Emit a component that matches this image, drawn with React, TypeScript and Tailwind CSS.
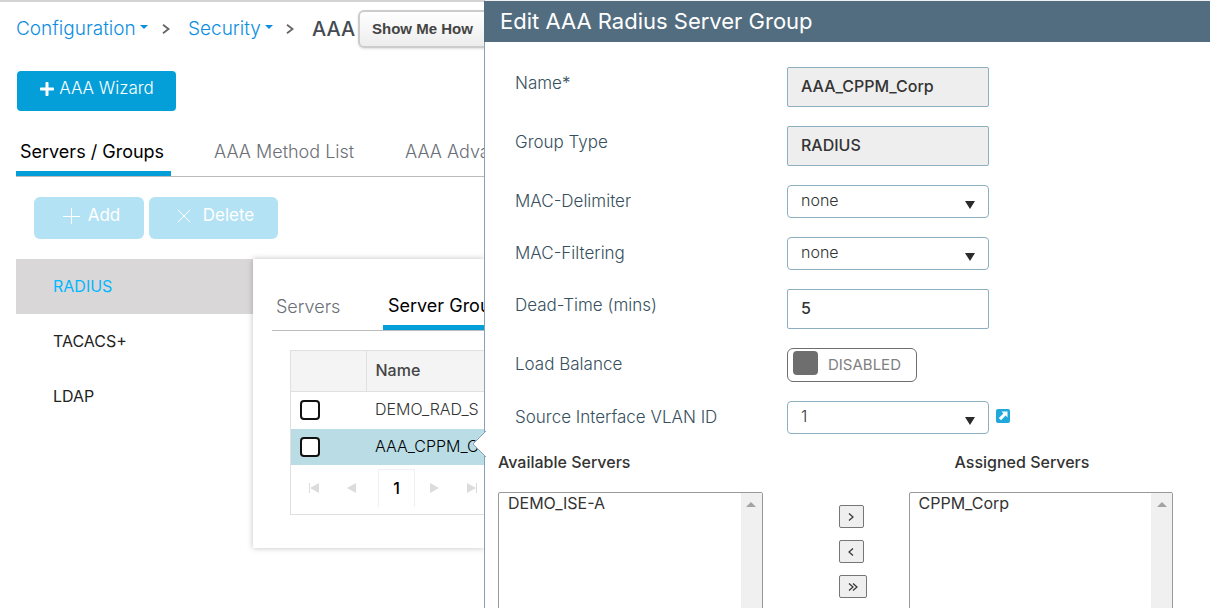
import { useState, type ReactNode } from 'react';
import { FaPlus } from 'react-icons/fa';

const sideItems = ['RADIUS', 'TACACS+', 'LDAP'];
const mainTabs = ['Servers / Groups', 'AAA Method List', 'AAA Advanced'];
const groups = ['DEMO_RAD_S', 'AAA_CPPM_C'];

const Caret = () => (
  <svg viewBox="0 0 8 4" className="mb-1 ml-1 h-1 w-2" fill="currentColor">
    <path d="M0 0h8L4 4z" />
  </svg>
);

const Separator = () => (
  <svg
    viewBox="0 0 8 10"
    className="h-[10px] w-2 shrink-0 text-[#666]"
    fill="none"
    stroke="currentColor"
    strokeWidth="1.8"
  >
    <path d="M1 .8 6.5 5 1 9.2" />
  </svg>
);

const Breadcrumb = () => (
  <nav className="flex h-10 items-center text-[19px] whitespace-nowrap">
    <a href="#configuration" className="flex w-[146px] shrink-0 items-center font-light text-[#0d8ee0]">
      Configuration
      <Caret />
    </a>
    <Separator />
    <a href="#security" className="ml-[18px] flex w-[98px] shrink-0 items-center font-light text-[#0d8ee0]">
      Security
      <Caret />
    </a>
    <Separator />
    <h1 className="ml-[18px] w-[42px] shrink-0 text-xl font-medium text-[#444b52]">AAA</h1>
    <button
      type="button"
      className="ml-1 h-[38px] w-[140px] shrink-0 rounded-md border-2 border-[#ccc] bg-linear-to-b from-white to-[#ededed] px-3 text-left font-['Liberation_Sans',sans-serif] text-[15px] font-bold text-[#444] shadow-sm"
    >
      Show Me How
    </button>
  </nav>
);

const PagerIcon = ({ d }: { d: string }) => (
  <svg viewBox="0 0 10 10" className="h-[10px] w-[10px]" fill="currentColor">
    <path d={d} />
  </svg>
);

const GroupsCard = () => (
  <div className="h-[289px] min-w-0 flex-1 bg-white pt-7 pl-[19px] shadow-[0_0_6px_rgba(0,0,0,0.25)]">
    <div className="flex h-[44px] border-b border-[#bbb] text-lg whitespace-nowrap">
      <button
        type="button"
        className="h-[43px] w-[111px] shrink-0 pb-1 pl-1 text-left font-light text-[#6b7078]"
      >
        Servers
      </button>
      <button
        type="button"
        className="h-[43px] shrink-0 border-b-[5px] border-[#049fd9] px-[5px] text-left text-black"
      >
        Server Groups
      </button>
    </div>
    <div className="mt-[19px] ml-[18px] border border-r-0 border-[#e0e0e0]">
      <table className="w-full table-fixed border-collapse text-left text-base whitespace-nowrap">
        <thead>
          <tr className="h-[40px] border-b border-[#e0e0e0] bg-[#f4f4f4]">
            <th className="w-[75px] border-r border-[#e0e0e0]" />
            <th className="pb-[2px] pl-[9px] font-medium text-[#444]">Name</th>
          </tr>
        </thead>
        <tbody>
          {groups.map((name, i) => (
            <tr key={name} className={i === 1 ? 'h-[36px] bg-[#b9dce5] text-black' : 'h-[38px] text-[#333]'}>
              <td className="pl-[9px]">
                <input
                  type="checkbox"
                  aria-label={name}
                  className="block size-5 appearance-none rounded-[4px] border-2 border-[#111] bg-white checked:bg-[#049fd9]"
                />
              </td>
              <td className="pb-[2px] pl-[9px] font-light">{name}</td>
            </tr>
          ))}
        </tbody>
      </table>
      <div className="flex h-[49px] items-center pb-1 text-[#dcdcdc]">
        <button type="button" aria-label="First page" className="ml-[18px]">
          <PagerIcon d="M0 0h1v10H0zM10 0v10L1 5z" />
        </button>
        <button type="button" aria-label="Previous page" className="ml-[28px]">
          <PagerIcon d="M9 0v10L0 5z" />
        </button>
        <button
          type="button"
          className="ml-[21px] h-[38px] w-[37px] border border-b-0 border-[#f0f0f0] font-medium text-black"
        >
          1
        </button>
        <button type="button" aria-label="Next page" className="ml-[15px]">
          <PagerIcon d="M0 0v10l9-5z" />
        </button>
        <button type="button" aria-label="Last page" className="ml-[27px]">
          <PagerIcon d="M9 0h1v10H9zM0 0v10l9-5z" />
        </button>
      </div>
    </div>
  </div>
);

const SecurityPage = () => (
  <main className="min-w-0 flex-1 overflow-hidden border-t-2 border-[#d4d4d4]">
    <div className="pt-[7px] pl-4">
      <Breadcrumb />
      <button
        type="button"
        className="mt-[22px] ml-px flex h-10 w-[159px] items-center justify-center gap-1 rounded bg-[#049fd9] pb-1 text-[17px] font-light text-white"
      >
        <FaPlus className="size-4" />
        AAA Wizard
      </button>
      <div className="mt-[17px] flex h-[49px] border-b border-[#bbb] text-lg whitespace-nowrap">
        {mainTabs.map((tab, i) => (
          <button
            key={tab}
            type="button"
            className={
              i === 0
                ? 'mr-[39px] h-12 w-[155px] shrink-0 border-b-[5px] border-[#049fd9] px-1 pt-[5px] text-left text-black'
                : 'mr-[39px] h-12 w-[152px] shrink-0 border-b-[5px] border-transparent px-1 pt-[5px] text-left font-light text-[#6b7078]'
            }
          >
            {tab}
          </button>
        ))}
      </div>
      <div className="mt-5 ml-[18px] flex gap-[5px] text-[17px] text-white">
        <button
          type="button"
          className="flex h-[42px] w-[110px] items-center justify-center gap-2 rounded-md bg-[#b3e2f4] pb-1 pl-1"
        >
          <svg viewBox="0 0 18 18" className="size-[18px]" fill="none" stroke="currentColor">
            <path d="M9.5 1v16M1 9.5h17" />
          </svg>
          Add
        </button>
        <button
          type="button"
          className="flex h-[42px] w-[129px] items-center justify-center gap-3 rounded-md bg-[#b3e2f4] pb-1 pl-1"
        >
          <svg viewBox="0 0 14 14" className="size-[14px]" fill="none" stroke="currentColor">
            <path d="m1 1 12 12M13 1 1 13" />
          </svg>
          Delete
        </button>
      </div>
      <div className="mt-5 flex">
        <ul className="w-[237px] shrink-0">
          {sideItems.map((item, i) => (
            <li key={item}>
              <a
                href={`#${item}`}
                className={
                  i === 0
                    ? 'flex h-[55px] items-center bg-[#d9d7d8] pb-[2px] pl-[37px] text-[#00b8ff]'
                    : 'flex h-[55px] items-center pb-[2px] pl-[37px] text-[#222]'
                }
              >
                {item}
              </a>
            </li>
          ))}
        </ul>
        <GroupsCard />
      </div>
    </div>
  </main>
);

interface FieldProps {
  id: string;
  label: string;
  children: ReactNode;
}

const Field = ({ id, label, children }: FieldProps) => (
  <div className="grid grid-cols-[272px_1fr]">
    <label htmlFor={id} className="h-[33px] text-[17px] leading-[33px] font-light text-[#36505e]">
      {label}
    </label>
    <div className="flex items-start gap-[7px]">{children}</div>
  </div>
);

const TextInput = ({ id, value, readOnly }: { id: string; value: string; readOnly?: boolean }) => (
  <input
    id={id}
    type="text"
    defaultValue={value}
    readOnly={readOnly}
    className="h-10 w-[202px] rounded-xs border border-[#8cb0c2] bg-white px-[13px] pb-[2px] text-base font-medium text-[#333] read-only:bg-[#eee]"
  />
);

const Select = ({ id, options }: { id: string; options: string[] }) => (
  <div className="relative w-[202px]">
    <select
      id={id}
      className="h-[33px] w-full appearance-none rounded border border-[#8cb0c2] bg-white px-[13px] pb-[3px] text-base font-light text-[#333]"
    >
      {options.map((option) => (
        <option key={option}>{option}</option>
      ))}
    </select>
    <svg
      viewBox="0 0 10 8"
      className="pointer-events-none absolute right-[14px] bottom-[9px] h-2 w-[10px]"
      fill="#2b2b2b"
    >
      <path d="M0 0h10L5 8z" />
    </svg>
  </div>
);

const ServerList = ({ id, servers }: { id: string; servers: string[] }) => (
  <div className="flex h-[180px] rounded-xs border border-[#999]">
    <select id={id} multiple className="min-w-0 flex-1 appearance-none text-base font-light text-[#333]">
      {servers.map((server) => (
        <option key={server} className="px-[9px] py-0 leading-5">
          {server}
        </option>
      ))}
    </select>
    <div className="w-[21px] bg-[#f0f0f0] pt-[9px]">
      <svg viewBox="0 0 10 5" className="mx-auto h-[5px] w-[10px]" fill="#a3a3a3">
        <path d="M0 5h10L5 0z" />
      </svg>
    </div>
  </div>
);

const MoveButton = ({ label, d, wide }: { label: string; d: string; wide?: boolean }) => (
  <button
    type="button"
    aria-label={label}
    className={
      wide
        ? 'flex h-[23px] w-7 items-center justify-center rounded-xs border border-[#767676] bg-[#efefef]'
        : 'flex h-[23px] w-[25px] items-center justify-center rounded-xs border border-[#767676] bg-[#efefef]'
    }
  >
    <svg viewBox="0 0 10 8" className="h-2 w-[10px]" fill="none" stroke="#333" strokeWidth="1.2">
      <path d={d} />
    </svg>
  </button>
);

const EditDrawer = () => {
  const [balanced, setBalanced] = useState(false);

  return (
    <aside className="relative w-3/5 border-t border-l border-t-[#f0f0f0] border-l-[#8a9fb8] bg-white">
      <h2 className="-ml-px flex h-[41px] items-center bg-[#526d80] pl-4 text-[22px] text-white">
        Edit AAA Radius Server Group
      </h2>
      <form>
        <div className="flex flex-col gap-[19px] pt-[25px] pl-[30px]">
          <Field id="name" label="Name*">
            <TextInput id="name" value="AAA_CPPM_Corp" readOnly />
          </Field>
          <Field id="group-type" label="Group Type">
            <TextInput id="group-type" value="RADIUS" readOnly />
          </Field>
          <Field id="mac-delimiter" label="MAC-Delimiter">
            <Select id="mac-delimiter" options={['none', 'colon', 'hyphen']} />
          </Field>
          <Field id="mac-filtering" label="MAC-Filtering">
            <Select id="mac-filtering" options={['none', 'mac']} />
          </Field>
          <Field id="dead-time" label="Dead-Time (mins)">
            <TextInput id="dead-time" value="5" />
          </Field>
          <Field id="load-balance" label="Load Balance">
            <button
              id="load-balance"
              type="button"
              role="switch"
              aria-checked={balanced}
              onClick={() => setBalanced(!balanced)}
              className="flex h-[34px] w-[130px] items-center gap-[10px] rounded-md border border-[#6e6e6e] pl-[5px] text-[15px] text-[#808080]"
            >
              <span className="mb-1 h-6 w-[25px] rounded bg-[#6e6e6e]" />
              {balanced ? 'ENABLED' : 'DISABLED'}
            </button>
          </Field>
          <Field id="vlan" label="Source Interface VLAN ID">
            <Select id="vlan" options={['1']} />
            <a href="#vlan" aria-label="Open VLAN" className="mt-2">
              <svg viewBox="0 0 14 14" className="size-[14px]">
                <rect width="14" height="14" rx="2" fill="#1fa8dc" />
                <path d="M5.5 2.5h6v6L9.6 6.6 5 11.2 2.8 9l4.6-4.6z" fill="#fff" />
              </svg>
            </a>
          </Field>
        </div>
        <div className="mt-4 grid grid-cols-[1fr_146px_1fr] pr-[37px] pl-[13px]">
          <label htmlFor="available" className="h-[42px] leading-6 font-medium text-[#333]">
            Available Servers
          </label>
          <span />
          <label htmlFor="assigned" className="h-[42px] pl-[46px] leading-6 font-medium text-[#333]">
            Assigned Servers
          </label>
          <ServerList id="available" servers={['DEMO_ISE-A']} />
          <div className="flex flex-col gap-3 pt-[13px] pl-[76px]">
            <MoveButton label="Assign" d="m3 .5 4 3.5-4 3.5" />
            <MoveButton label="Unassign" d="M7 .5 3 4l4 3.5" />
            <MoveButton label="Assign all" d="m1 .5 4 3.5-4 3.5m4-7L9 4 5 7.5" wide />
          </div>
          <ServerList id="assigned" servers={['CPPM_Corp']} />
        </div>
      </form>
      <svg viewBox="0 0 14 26" className="absolute top-[430px] -left-[13px] h-[26px] w-[14px]">
        <path d="M14 0 1 13l13 13" fill="#fff" stroke="#8a9fb8" />
      </svg>
    </aside>
  );
};

export default function App() {
  return (
    <div className="flex h-screen overflow-hidden bg-white font-['Inter',sans-serif] text-base">
      <SecurityPage />
      <EditDrawer />
    </div>
  );
}
